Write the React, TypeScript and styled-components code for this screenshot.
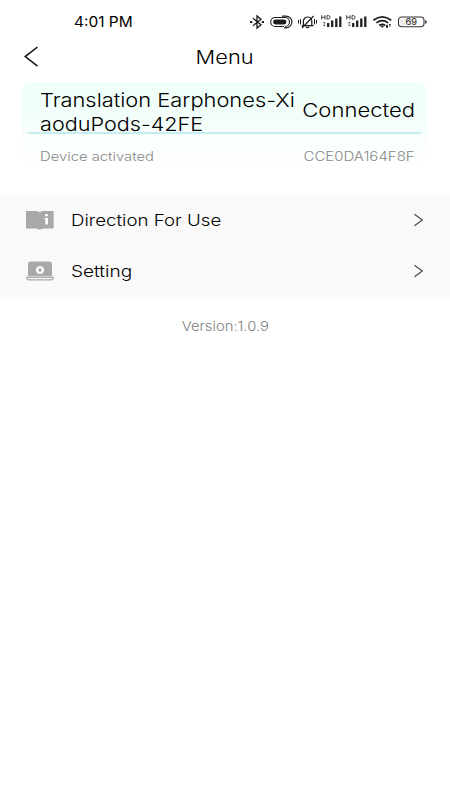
import React from 'react';
import styled, { createGlobalStyle } from 'styled-components';

const GlobalStyle = createGlobalStyle`
  * { box-sizing: border-box; }
  body { margin: 0; background: #fff; font-family: Inter, "Liberation Sans", sans-serif; color: #000; }
`;

const Screen = styled.main`
  display: flex;
  flex-direction: column;
  width: 450px;
  height: 800px;
  overflow: hidden;
  background: #fff;
`;

type LabelProps = { $size: number; $stretch: number; $origin?: string; $tone?: string; $weight?: number };

/* Text in the device's extended-width face: Inter widened horizontally. */
const Label = styled.span<LabelProps>`
  display: block;
  flex: none;
  white-space: nowrap;
  font-size: ${(p) => p.$size}px;
  font-weight: ${(p) => p.$weight ?? 300};
  line-height: 24px;
  color: ${(p) => p.$tone ?? 'inherit'};
  transform: scaleX(${(p) => p.$stretch});
  transform-origin: ${(p) => p.$origin ?? 'left'} center;
`;

const StatusBar = styled.header`
  display: flex;
  align-items: center;
  justify-content: space-between;
  height: 40px;
  padding: 3px 23px 0 74px;
`;

const StatusIcons = styled.svg`
  display: block;
  flex: none;
  width: 178px;
  height: 18px;
`;

const TitleBar = styled.div`
  display: grid;
  grid-template-columns: 60px 1fr 60px;
  align-items: center;
  justify-items: center;
  height: 33px;
`;

const BackButton = styled.button`
  display: flex;
  justify-self: start;
  margin-left: 23px;
  padding: 0;
  border: 0;
  background: none;
  color: inherit;
`;

const DeviceCard = styled.section`
  height: 88px;
  margin: 9px 23px 0 22px;
  border-radius: 10px;
  background: linear-gradient(#f0fff8 0%, #f3fefa 45%, #fafffe 68%, #fff 100%);
`;

const DeviceHeader = styled.div`
  display: flex;
  align-items: center;
  justify-content: space-between;
  height: 52px;
  margin: 0 6px;
  padding: 8px 6px 0 12px;
  border-bottom: 2px solid #c6edf1;
`;

const DeviceName = styled.div`
  flex: none;
  padding-top: 4px;
`;

const DeviceMeta = styled.div`
  display: flex;
  justify-content: space-between;
  padding: 11px 12.5px 0 18px;
`;

const MenuList = styled.nav`
  display: flex;
  flex-direction: column;
  margin-top: 25px;
  background: #f9f9f9;
`;

const MenuRow = styled.a`
  display: grid;
  grid-template-columns: 45px 1fr 12px;
  align-items: center;
  height: 51px;
  padding: 0 25px 1px 26px;
  svg { display: block; }
`;

const Footer = styled.footer`
  display: flex;
  justify-content: center;
  padding-top: 17px;
`;

const Signal = ({ x }: { x: number }) => (
  <g transform={`translate(${x} 0)`}>
    <path d="M.7 2.2v4.3M4 2.2v4.3M.7 4.3H4M6 2.6v3.5h1.3a1.75 1.75 0 0 0 0-3.5z" fill="none" stroke="#333" strokeWidth=".9" />
    <path d="M2 10.2h2.6L3.3 8.8zM2 11.800h2.6l-1.3 1.5z" fill="#222" />
    <path d="M7.200 10v3.900M11.200 7.600v6.300M15.300 5.500v8.400M19.300 3.500v10.400" stroke="#222" strokeWidth="2.3" />
  </g>
);

const DeviceStatus = () => (
  <StatusIcons viewBox="0 0 178 18" aria-label="Device status">
    <g fill="none" stroke="#1c1c1c" strokeWidth="1.3">
      <path d="m4 5.300 8 6.500-4 3.300V2.900l4 3.300-8 6.500" />
      <path d="M1 9h2.200M12.800 9H15" strokeWidth="2" />
      <path d="M36 4.500H26.200a4.500 4.500 0 0 0 0 9H35M33 3.100h4a5.900 5.900 0 0 1 0 11.800h-2" strokeWidth="1.1" />
      <path d="M26.500 9h8.500" strokeWidth="4.8" strokeLinecap="round" />
      <path d="M36 4.500a4.500 4.500 0 0 1 0 9" strokeWidth="1.1" />
      <path d="M52.700 12.600h11.800M54.400 12.400V8.200a4.200 4.200 0 0 1 8.400 0v4.200M57 13.600a1.700 1.700 0 0 0 3.200 0M53 15 64.500 3" strokeWidth="1.2" />
      <path d="M49.500 7v3.500M51.500 6v5.500M65.500 6v5.500M67.500 7v3.500" strokeWidth="1" />
    </g>
    <Signal x={72} />
    <Signal x={97} />
    <g fill="none" stroke="#1c1c1c" strokeWidth="1.7">
      <path d="M124.400 7.200q8.900-6.800 17.800 0M127.400 9.900q5.900-4.400 11.800 0M130.200 12.500q3-2.200 6 0" />
    </g>
    <path d="m131.500 13.300 1.700-1 1.700 1-1.700 1.500zM137 12.700l1-1.500 1 1.500v2h-2zM140 11h1.800l-.9 3.700z" fill="#1c1c1c" />
    <rect x="149.5" y="4" width="25.5" height="9.8" rx="3.2" fill="#fff" stroke="#333" strokeWidth="1.1" />
    <path d="M152.500 5.500h13v7h-13q-1.500-.2-1.500-2v-3q0-1.800 1.500-2" fill="#ededed" />
    <path d="M176.800 7.400v3" stroke="#222" strokeWidth="1.4" />
    <text x="162.3" y="12.1" textAnchor="middle" fontFamily="Inter, sans-serif" fontSize="8.5" textLength="11.5" lengthAdjust="spacingAndGlyphs" fill="#222">69</text>
  </StatusIcons>
);

const Chevron = () => (
  <svg width="12" height="14" viewBox="0 0 12 14">
    <path d="m1.500 1.200 7.800 5.800-7.800 5.800" fill="none" stroke="#4a4a4a" strokeWidth="1.2" />
  </svg>
);

const ManualIcon = () => (
  <svg width="28" height="20" viewBox="0 0 28 20">
    <path d="M0 1h10q3 .2 3.800 1.400Q14.700 1.200 17.500 1h10.100v17.400H17q-1 1.100-3.200 1.100T10.500 18.400H0z" fill="#a8a8a8" />
    <path d="M19 4.200h3v2h-3zM18.800 8H22v6.500h-2.700V9.500h-.5z" fill="#fff" />
  </svg>
);

const LaptopIcon = () => (
  <svg width="29" height="20" viewBox="0 0 29 20">
    <path d="M2 15.200V3.200Q2 .5 4.700.5h18.600Q26 .5 26 3.200v12z" fill="#a8a8a8" />
    <path d="M.7 16.400h26.600v.3q0 2.100-2.600 2.100H3.300Q.7 18.800.7 16.700z" fill="none" stroke="#a8a8a8" strokeWidth="1.2" />
    <path d="m11.800 5.300h4.400L18.500 9l-2.300 3.700h-4.400L9.500 9z" fill="#fff" />
    <circle cx="14" cy="9" r="1.7" fill="#a8a8a8" />
  </svg>
);

export default function App() {
  return (
    <Screen>
      <GlobalStyle />
      <StatusBar>
        <Label $size={13.8} $stretch={1.12} $weight={400}>4:01 PM</Label>
        <DeviceStatus />
      </StatusBar>
      <TitleBar>
        <BackButton aria-label="Back">
          <svg width="16" height="22" viewBox="0 0 16 22">
            <path d="M14.500 1 2.200 10.600l12.300 9.600" fill="none" stroke="#111" strokeWidth="1.5" />
          </svg>
        </BackButton>
        <Label $size={18.5} $stretch={1.18} $origin="center">Menu</Label>
      </TitleBar>
      <DeviceCard>
        <DeviceHeader>
          <DeviceName>
            <Label $size={19} $stretch={1.15}>Translation Earphones-Xi</Label>
            <Label $size={19} $stretch={1.138}>aoduPods-42FE</Label>
          </DeviceName>
          <Label $size={19} $stretch={1.162} $origin="right">Connected</Label>
        </DeviceHeader>
        <DeviceMeta>
          <Label $size={12.5} $stretch={1.185} $tone="#888">Device activated</Label>
          <Label $size={12.5} $stretch={1.2} $origin="right" $tone="#888">CCE0DA164F8F</Label>
        </DeviceMeta>
      </DeviceCard>
      <MenuList>
        <MenuRow>
          <ManualIcon />
          <Label $size={16.5} $stretch={1.132}>Direction For Use</Label>
          <Chevron />
        </MenuRow>
        <MenuRow>
          <LaptopIcon />
          <Label $size={16.5} $stretch={1.155}>Setting</Label>
          <Chevron />
        </MenuRow>
      </MenuList>
      <Footer>
        <Label $size={13} $stretch={1.138} $origin="center" $tone="#808080">Version:1.0.9</Label>
      </Footer>
    </Screen>
  );
}
